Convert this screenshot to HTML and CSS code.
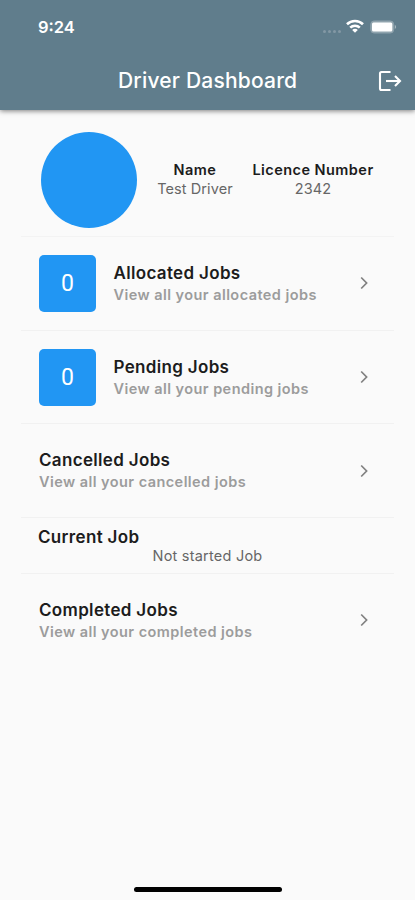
FILE: index.html
```html
<!DOCTYPE html>
<html lang="en">
<head>
<meta charset="utf-8">
<title>Driver Dashboard</title>
<link rel="stylesheet" href="styles.css">
</head>
<body>
<div class="screen">
  <header class="header">
    <div class="status">
      <span class="time">9:24</span>
      <div class="status-icons">
        <span class="signal"><i></i><i></i><i></i><i></i></span>
        <svg class="wifi" width="18" height="14" viewBox="0 0 18 14" fill="none" stroke="#fff" stroke-width="2.6">
          <path d="M1 5.2C5.4.9 12.600.9 17 5.200"/>
          <path d="M4.200 8.700c2.700-2.700 6.900-2.700 9.600 0"/>
          <path d="M9 13.800 6.200 11c1.500-1.600 4.100-1.600 5.600 0z" fill="#fff" stroke="none"/>
        </svg>
        <svg class="battery" width="27" height="14" viewBox="0 0 27 14">
          <rect x=".7" y=".9" width="23" height="12.200" rx="3.500" fill="#90a4ae" stroke="#90a4ae" stroke-width=".8"/>
          <rect x="2" y="2.400" width="20.300" height="9.200" rx="1.500" fill="#fff"/>
          <path d="M24.800 4.800q2.600 2.200 0 4.400z" fill="#a9b8c0"/>
        </svg>
      </div>
    </div>
    <div class="appbar">
      <h1 class="title">Driver Dashboard</h1>
      <svg class="logout" width="24" height="22" viewBox="0 0 24 22" fill="none" stroke="#fff" stroke-width="2.1">
        <path d="M12.500 2H3.500Q2 2 2 3.500v15Q2 20 3.500 20H12.500"/>
        <path d="M8 11h14"/>
        <path d="m17 6 5 5-5 5"/>
      </svg>
    </div>
  </header>
  <main class="content">
    <section class="profile">
      <div class="avatar"></div>
      <div class="info name"><b>Name</b><span>Test Driver</span></div>
      <div class="info licence"><b>Licence Number</b><span>2342</span></div>
    </section>
    <section class="row">
      <div class="count">0</div>
      <div class="text"><h2>Allocated Jobs</h2><p>View all your allocated jobs</p></div>
      <svg class="chevron" width="8" height="14" viewBox="0 0 8 14"><path d="m1.200 1.500 5.400 5.500-5.400 5.500"/></svg>
    </section>
    <section class="row">
      <div class="count">0</div>
      <div class="text"><h2>Pending Jobs</h2><p>View all your pending jobs</p></div>
      <svg class="chevron" width="8" height="14" viewBox="0 0 8 14"><path d="m1.200 1.500 5.400 5.500-5.400 5.500"/></svg>
    </section>
    <section class="row">
      <div class="text"><h2>Cancelled Jobs</h2><p>View all your cancelled jobs</p></div>
      <svg class="chevron" width="8" height="14" viewBox="0 0 8 14"><path d="m1.200 1.500 5.400 5.500-5.400 5.500"/></svg>
    </section>
    <section class="current">
      <h2>Current Job</h2>
      <p>Not started Job</p>
    </section>
    <section class="row last">
      <div class="text"><h2>Completed Jobs</h2><p>View all your completed jobs</p></div>
      <svg class="chevron" width="8" height="14" viewBox="0 0 8 14"><path d="m1.200 1.500 5.400 5.500-5.400 5.500"/></svg>
    </section>
  </main>
  <div class="home"></div>
</div>
</body>
</html>
```
FILE: styles.css
```css
* { box-sizing: border-box; }
body, h1, h2, p { margin: 0; }
body {
  background: #fafafa;
  color: #1c1c1c;
  font-family: Inter, "Liberation Sans", sans-serif;
  white-space: nowrap;
}
.screen { display: flex; flex-direction: column; width: 415px; height: 900px; overflow: hidden; }
.header {
  height: 110px;
  flex: none;
  background: #607d8c;
  color: #fff;
  box-shadow: 0 1px 5px rgba(0, 0, 0, .5);
}
.status { display: flex; justify-content: space-between; height: 52px; padding: 17px 18px 0 38px; }
.time { font-size: 16.500px; line-height: 20px; font-weight: 600; }
.status-icons { display: flex; align-items: flex-start; padding-top: 2px; }
.signal { display: flex; gap: 2px; padding-top: 10.500px; margin-right: 5px; }
.signal i { width: 3px; height: 3px; border-radius: 50%; background: #8398a4; }
.battery { margin-left: 6px; margin-top: 1px; }
.appbar { display: grid; grid-template-columns: 118px 1fr 24px; align-items: center; height: 58px; padding-right: 12px; }
.title { grid-column: 2; font-size: 21px; line-height: 26px; font-weight: 500; letter-spacing: .2px; }
.logout { margin-left: -1px; }
.content { padding: 0 21px; }
.profile { display: flex; height: 127px; padding: 21.500px 0 0 20px; border-bottom: 1px solid #f3f3f3; }
.avatar { width: 96px; height: 96px; border-radius: 50%; background: #2196f3; }
.info { display: flex; flex-direction: column; align-items: center; padding-top: 29.500px; font-size: 14.500px; line-height: 18px; }
.info b { font-weight: 600; letter-spacing: .45px; }
.info span { color: #666; letter-spacing: .08px; padding-top: 1px; }
.name { width: 76px; margin-left: 20px; }
.licence { width: 122px; margin-left: 19px; }
.row { display: flex; align-items: center; height: 93.700px; padding: 0 26px 0 18px; border-bottom: 1px solid #f1f1f1; }
.count {
  width: 57px;
  height: 57px;
  margin-right: 17.500px;
  border-radius: 5px;
  background: #2196f3;
  color: #fff;
  font-family: Roboto, Inter, sans-serif;
  font-size: 23px;
  line-height: 58px;
  text-align: center;
}
.text { flex: 1; padding-top: 1px; }
h2 { font-size: 17px; line-height: 22px; font-weight: 600; letter-spacing: .33px; }
.text p { font-size: 14.500px; line-height: 22px; font-weight: 600; letter-spacing: .44px; color: #9c9c9c; }
.chevron { fill: none; stroke: #808080; stroke-width: 1.700; }
.current { height: 55.500px; padding: 7.500px 0 0 17px; border-bottom: 1px solid #f1f1f1; }
.current p { margin-left: 114.500px; font-size: 14.500px; line-height: 15px; letter-spacing: .22px; color: #666; }
.last { border: 0; }
.home { width: 148px; height: 5px; margin: auto auto 8px 134px; border-radius: 3px; background: #000; }
```
